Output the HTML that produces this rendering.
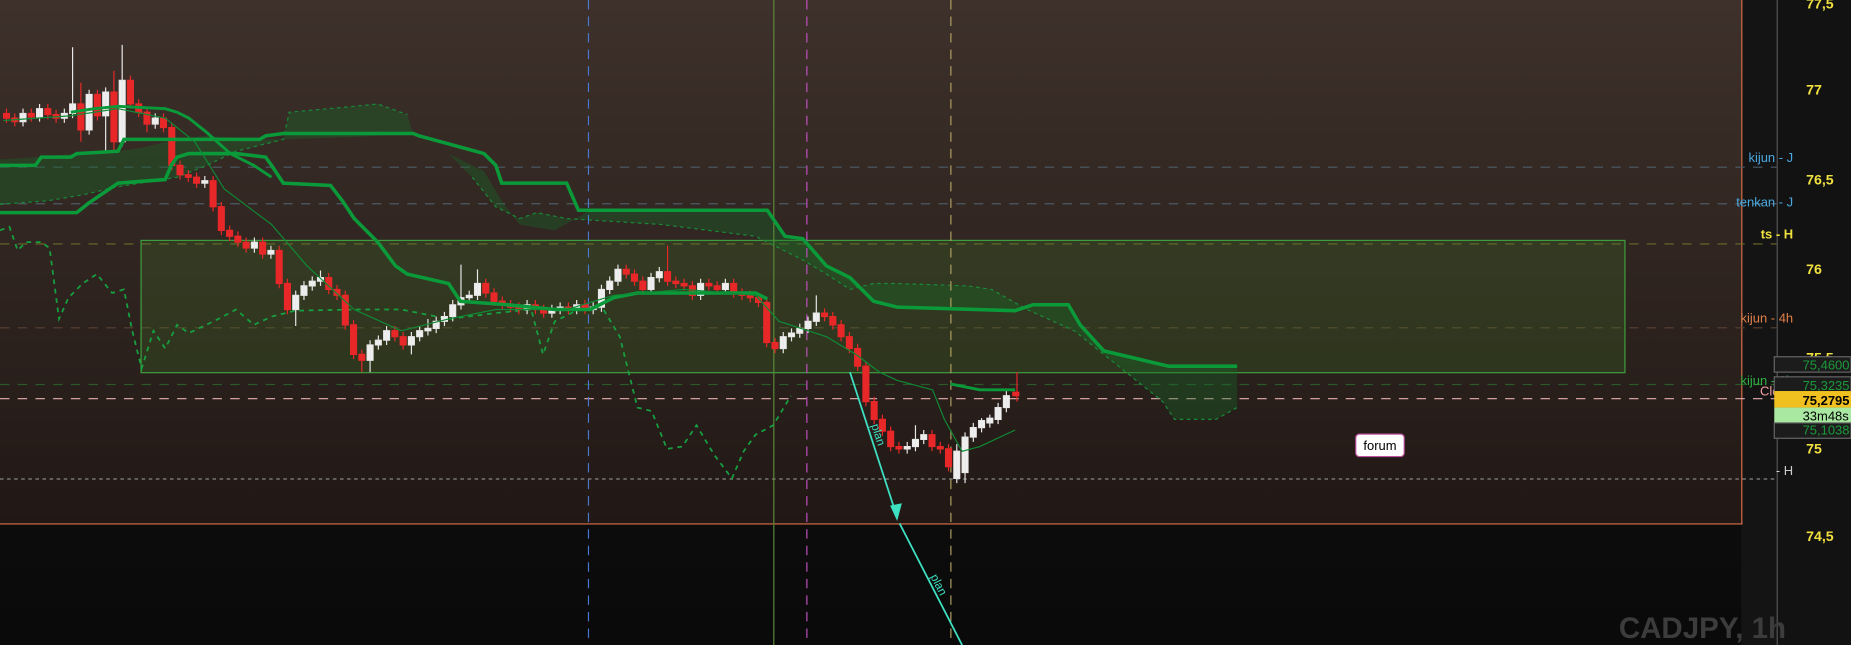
<!DOCTYPE html>
<html><head><meta charset="utf-8"><style>
html,body{margin:0;padding:0;background:#0e0e0e;overflow:hidden}
svg{display:block}
text{font-family:"Liberation Sans",sans-serif}
</style></head><body>
<svg width="1851" height="645" viewBox="0 0 1568 546" preserveAspectRatio="none" xmlns="http://www.w3.org/2000/svg">
<defs>
<linearGradient id="bg" x1="0" y1="0" x2="0" y2="1"><stop offset="0" stop-color="#3e312b"/><stop offset="1" stop-color="#211815"/></linearGradient>
<linearGradient id="bg2" x1="0" y1="0" x2="0" y2="1"><stop offset="0" stop-color="#151515"/><stop offset="1" stop-color="#0a0a0a"/></linearGradient>
</defs>
<rect x="0" y="0" width="1568" height="546" fill="url(#bg2)"/>
<rect x="0" y="0" width="1475" height="443" fill="url(#bg)"/>
<rect x="1475" y="0" width="30" height="546" fill="#141414"/>
<rect x="1505" y="0" width="63" height="546" fill="#121212"/>
<line x1="1505.5" y1="0" x2="1505.5" y2="546" stroke="#555"/>
<line x1="0" y1="443.5" x2="1476" y2="443.5" stroke="#e0704a"/>
<line x1="1475.5" y1="0" x2="1475.5" y2="444" stroke="#e0704a"/>
<g stroke-dasharray="8 7" stroke-width="1">
<line x1="0" y1="141.5" x2="1505" y2="141.5" stroke="#4c5a66"/>
<line x1="0" y1="172.5" x2="1505" y2="172.5" stroke="#4c5a66"/>
<line x1="0" y1="206.5" x2="1505" y2="206.5" stroke="#6b6a2a"/>
<line x1="0" y1="277.5" x2="1505" y2="277.5" stroke="#5a4232"/>
<line x1="0" y1="325.5" x2="1505" y2="325.5" stroke="#2a5a2a"/>
<line x1="0" y1="337.5" x2="1505" y2="337.5" stroke="#e8b0b0"/>
<line x1="0" y1="405.5" x2="1505" y2="405.5" stroke="#888" stroke-dasharray="3 3"/>
</g>
<rect x="119.5" y="203.5" width="1257" height="112" fill="rgba(70,130,40,0.22)" stroke="#3fa040"/>
<polygon points="0,173 40,170 70,165 100,158 150,150 175,140 200,128 240,118 245,95 300,90 320,88 345,97 350,113 300,116 240,118 220,118 175,115 150,118 120,125 100,128 65,130 30,133 0,135" fill="rgba(20,110,40,0.35)"/>
<polyline points="0,173 40,170 70,165 100,158 150,150 175,140 200,128 240,118 245,95 300,90 320,88 345,97" fill="none" stroke="#1a8a3a" stroke-dasharray="3 3"/>
<polygon points="355,115 380,130 410,145 425,170 440,190 470,195 500,178 650,178 665,200 680,202 700,225 720,235 740,255 760,260 860,263 875,258 905,258 915,275 935,297 990,310 1048,310 1048,345 1030,355 995,355 985,340 960,320 935,300 910,280 870,262 840,245 820,242 760,240 740,240 720,245 700,232 680,220 660,210 640,200 600,195 560,190 480,185 455,180 440,185 420,175 400,150 380,130" fill="rgba(20,110,40,0.35)"/>
<polyline points="400,150 420,175 440,185 455,180 480,185 560,190 600,195 640,200 660,210 680,220 700,232 720,245 740,240 760,240 820,242 840,245 870,262 910,280 935,300 960,320 985,340 995,355 1030,355 1048,345" fill="none" stroke="#1a8a3a" stroke-dasharray="3 3"/>
<line x1="498.5" y1="0" x2="498.5" y2="546" stroke="#4a78d0" stroke-dasharray="8 6"/>
<line x1="655.5" y1="0" x2="655.5" y2="546" stroke="#5a8a3a"/>
<line x1="683.5" y1="0" x2="683.5" y2="546" stroke="#c050c0" stroke-dasharray="8 6"/>
<line x1="805.5" y1="0" x2="805.5" y2="546" stroke="#b0a060" stroke-dasharray="8 6"/>
<polyline points="0,195 8,192 15,212 22,205 35,205 42,210 50,270 58,252 70,240 82,232 95,248 105,245 112,280 120,312 130,280 140,295 150,275 160,282 185,270 200,262 215,275 230,268 250,263 300,262 340,262 380,270 420,265 450,262 460,300 470,272 490,262 510,260 525,285 540,345 552,348 565,380 578,378 590,360 605,385 620,405 630,382 640,368 655,360 670,335" fill="none" stroke="#16a040" stroke-width="1.5" stroke-dasharray="4 4"/>
<!-- red candles -->
<path fill="#e82828" stroke="#e82828" stroke-width="1" d="M5.5 92V104M3 96h5v4h-5z M12.5 96V107M10 100h5v3h-5z M26.5 92V103M24 96h5v3h-5z M40.5 88V101M38 92h5v5h-5z M47.5 93V104M45 97h5v3h-5z M68.5 70V120M66 88h5v22h-5z M82.5 76V102M80 80h5v18h-5z M96.5 60V128M94 78h5v42h-5z M110.5 64V92M108 68h5v20h-5z M117.5 84V99M115 88h5v7h-5z M124.5 91V112M122 95h5v10h-5z M138.5 96V112M136 100h5v8h-5z M145.5 104V144M143 108h5v32h-5z M152.5 136V152M150 140h5v8h-5z M159.5 144V154M157 148h5v2h-5z M166.5 146V159M164 150h5v5h-5z M180.5 149V179M178 153h5v22h-5z M187.5 171V199M185 175h5v20h-5z M194.5 191V204M192 195h5v5h-5z M201.5 196V209M199 200h5v5h-5z M208.5 201V214M206 205h5v5h-5z M222.5 201V219M220 205h5v10h-5z M236.5 208V244M234 212h5v28h-5z M243.5 236V266M241 240h5v22h-5z M278.5 231V249M276 235h5v10h-5z M285.5 241V254M283 245h5v5h-5z M292.5 246V279M290 250h5v25h-5z M299.5 271V304M297 275h5v25h-5z M306.5 296V315M304 300h5v5h-5z M334.5 276V289M332 280h5v5h-5z M341.5 281V296M339 285h5v7h-5z M411.5 236V252M409 240h5v8h-5z M418.5 244V259M416 248h5v7h-5z M425.5 251V262M423 255h5v3h-5z M432.5 254V264M430 258h5v2h-5z M439.5 256V266M437 260h5v2h-5z M453.5 254V266M451 258h5v4h-5z M460.5 258V269M458 262h5v3h-5z M481.5 256V266M479 260h5v2h-5z M495.5 254V266M493 258h5v4h-5z M530.5 224V236M528 228h5v4h-5z M537.5 228V242M535 232h5v6h-5z M544.5 234V249M542 238h5v7h-5z M565.5 208V242M563 230h5v8h-5z M572.5 234V244M570 238h5v2h-5z M579.5 236V246M577 240h5v2h-5z M586.5 238V254M584 242h5v8h-5z M600.5 236V246M598 240h5v2h-5z M607.5 238V249M605 242h5v3h-5z M621.5 236V252M619 240h5v8h-5z M628.5 244V254M626 248h5v2h-5z M635.5 246V256M633 250h5v2h-5z M642.5 248V260M640 252h5v4h-5z M649.5 252V294M647 256h5v34h-5z M656.5 286V299M654 290h5v5h-5z M698.5 261V272M696 265h5v3h-5z M705.5 264V279M703 268h5v7h-5z M712.5 271V289M710 275h5v10h-5z M719.5 281V299M717 285h5v10h-5z M726.5 291V314M724 295h5v15h-5z M733.5 306V344M731 310h5v30h-5z M740.5 336V359M738 340h5v15h-5z M747.5 351V369M745 355h5v10h-5z M754.5 361V382M752 365h5v13h-5z M761.5 374V384M759 378h5v2h-5z M789.5 364V382M787 368h5v10h-5z M796.5 374V384M794 378h5v2h-5z M803.5 376V399M801 380h5v15h-5z M861.5 315V340M858 332h5v3h-5z"/>
<!-- white candles -->
<path fill="#f0f0f0" stroke="#e8e8e8" stroke-width="1" d="M19.5 92V107M17 96h5v7h-5z M33.5 88V103M31 92h5v7h-5z M54.5 92V104M52 96h5v4h-5z M61.5 40V100M59 88h5v8h-5z M75.5 76V114M73 80h5v30h-5z M89.5 74V128M87 78h5v20h-5z M103.5 38V124M101 68h5v52h-5z M131.5 96V109M129 100h5v5h-5z M173.5 149V159M171 153h5v2h-5z M215.5 201V214M213 205h5v5h-5z M229.5 208V219M227 212h5v3h-5z M250.5 246V276M248 250h5v12h-5z M257.5 238V254M255 242h5v8h-5z M264.5 234V246M262 238h5v4h-5z M271.5 229V242M269 235h5v3h-5z M313.5 288V315M311 292h5v13h-5z M320.5 284V296M318 288h5v4h-5z M327.5 276V292M325 280h5v8h-5z M348.5 281V300M346 285h5v7h-5z M355.5 276V289M353 280h5v5h-5z M362.5 270V284M360 278h5v2h-5z M369.5 268V282M367 272h5v6h-5z M376.5 264V276M374 268h5v4h-5z M383.5 254V272M381 258h5v10h-5z M390.5 224V262M388 252h5v6h-5z M397.5 246V256M395 250h5v2h-5z M404.5 228V254M402 240h5v10h-5z M446.5 254V266M444 258h5v4h-5z M467.5 258V269M465 262h5v3h-5z M474.5 256V266M472 260h5v2h-5z M488.5 254V266M486 258h5v4h-5z M502.5 256V266M500 260h5v2h-5z M509.5 241V264M507 245h5v15h-5z M516.5 234V249M514 238h5v7h-5z M523.5 224V242M521 228h5v10h-5z M551.5 231V249M549 235h5v10h-5z M558.5 226V239M556 230h5v5h-5z M593.5 236V254M591 240h5v10h-5z M614.5 236V249M612 240h5v5h-5z M663.5 281V299M661 285h5v10h-5z M670.5 278V289M668 282h5v3h-5z M677.5 274V286M675 278h5v4h-5z M684.5 268V282M682 272h5v6h-5z M691.5 250V276M689 265h5v7h-5z M768.5 374V384M766 378h5v2h-5z M775.5 360V382M773 372h5v6h-5z M782.5 364V376M780 368h5v4h-5z M810.5 376V409M808 382h5v23h-5z M817.5 366V409M815 370h5v30h-5z M824.5 358V374M822 362h5v8h-5z M831.5 354V366M829 356h5v6h-5z M838.5 351V362M836 354h5v4h-5z M845.5 341V359M843 345h5v10h-5z M852.5 331V349M850 335h5v10h-5z"/>
<polyline points="0,140 30,140 35,133 60,133 65,130 100,128 105,118 220,118 225,115 240,113 350,113 355,115 410,130 420,140 425,155 480,155 490,178 650,178 665,200 680,202 700,225 720,235 740,255 760,260 860,263 875,258 905,258 915,275 935,297 990,310 1048,310" fill="none" stroke="#0b9a3a" stroke-width="3"/>
<polyline points="0,180 65,180 75,172 100,155 140,152 145,140 150,133 160,130 200,130 225,133 230,140 240,155 280,157 290,170 300,185 320,205 335,225 345,232 380,240 390,255 430,258 470,262 500,262 520,252 540,248 600,248 640,248 650,253" fill="none" stroke="#0b9a3a" stroke-width="3"/>
<polyline points="60,95 80,92 100,90 140,92 150,95 160,100 175,112 195,130 215,140 230,150" fill="none" stroke="#0b9a3a" stroke-width="2.5"/>
<polyline points="805,325 830,330 860,330" fill="none" stroke="#0b9a3a" stroke-width="2.5"/>
<polyline points="3,102 60,98 100,92 140,100 165,120 190,160 230,190 260,225 300,262 340,280 380,270 420,262 480,262 520,250 580,245 640,250 660,272 700,285 725,300 745,315 760,322 790,330 800,355 815,382 830,378 860,364" fill="none" stroke="#0f8a35" stroke-width="1"/>
<line x1="720" y1="315" x2="760" y2="438" stroke="#3de0c0" stroke-width="1.5"/>
<polygon points="760,441 754,428 764,426" fill="#3de0c0"/>
<line x1="762" y1="443" x2="815" y2="546" stroke="#3de0c0" stroke-width="1.5"/>
<text x="0" y="0" font-size="10" fill="#3de0c0" transform="translate(738,360) rotate(72)">plan</text>
<text x="0" y="0" font-size="10" fill="#3de0c0" transform="translate(788,488) rotate(63)">plan</text>
<g font-size="11" text-anchor="end">
<text x="1519" y="137" fill="#4aa8e0">kijun - J</text>
<text x="1519" y="175" fill="#4aa8e0">tenkan - J</text>
<text x="1519" y="202" fill="#f0e040" font-weight="bold">ts - H</text>
<text x="1519" y="273" fill="#e0804a">kijun - 4h</text>
<text x="1519" y="326" fill="#30b040">kijun - 1h</text>
<text x="1516" y="335" fill="#f0a0a0">Clo J</text>
<text x="1519" y="402" fill="#ccc">- H</text>
</g>
<g font-size="12" fill="#f0e040" font-weight="bold">
<text x="1530" y="7">77,5</text>
<text x="1530" y="80">77</text>
<text x="1530" y="156">76,5</text>
<text x="1530" y="232">76</text>
<text x="1530" y="307">75,5</text>
<text x="1530" y="384">75</text>
<text x="1530" y="458">74,5</text>
</g>
<g font-size="11">
<rect x="1503" y="302" width="65" height="13" fill="#1c1c1c" stroke="#666"/><text x="1527" y="313" fill="#1a9a3a">75,4600</text>
<rect x="1503" y="319" width="65" height="13" fill="#1c1c1c" stroke="#666"/><text x="1527" y="330" fill="#1a9a3a">75,3235</text>
<rect x="1503" y="331" width="65" height="14" fill="#f0c020"/><text x="1527" y="343" fill="#000" font-weight="bold">75,2795</text>
<rect x="1503" y="345" width="65" height="13" fill="#a8e8a0"/><text x="1527" y="356" fill="#000">33m48s</text>
<rect x="1503" y="358" width="65" height="13" fill="#1c1c1c" stroke="#666"/><text x="1527" y="368" fill="#1a9a3a">75,1038</text>
</g>
<rect x="1148.5" y="367.5" width="41" height="19" rx="3" fill="#fff" stroke="#c050a0"/>
<text x="1169" y="381" font-size="11" text-anchor="middle" fill="#000">forum</text>
<text x="1513" y="540" font-size="25" font-weight="bold" fill="#3c3c3c" text-anchor="end">CADJPY, 1h</text>
</svg>
</body></html>
